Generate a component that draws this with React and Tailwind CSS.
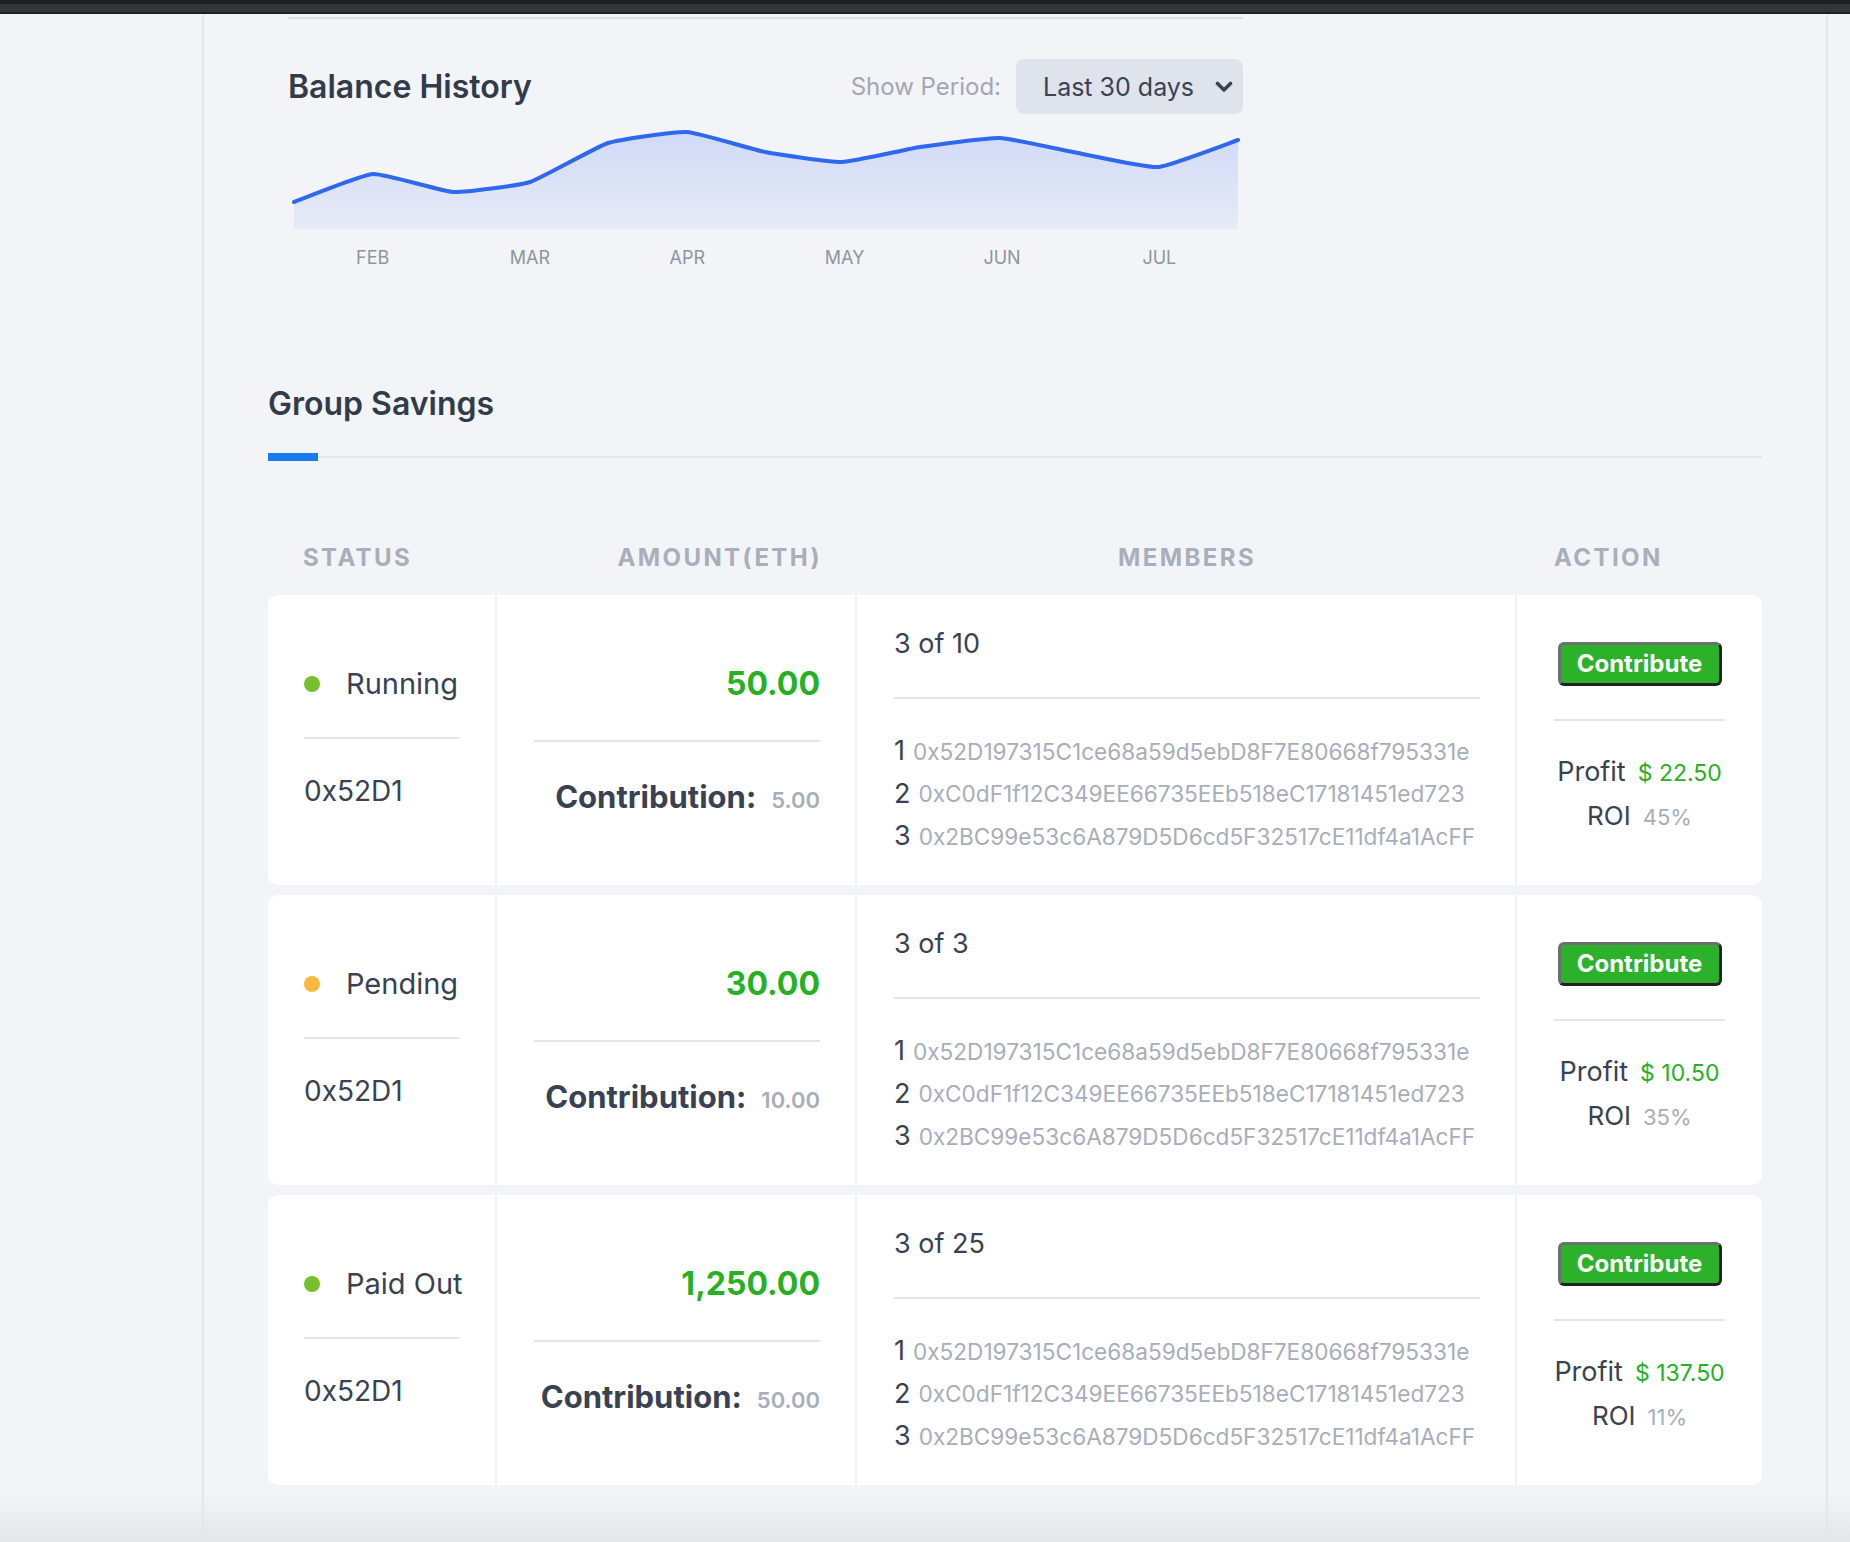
import React from "react";

const points = [
  [6, 88], [85, 60], [165, 78], [242, 68], [320, 29], [399, 18], [477, 38],
  [554, 48], [632, 33], [712, 24], [790, 39], [870, 53], [950, 26],
];

function smoothPath(pts) {
  let d = `M${pts[0][0]},${pts[0][1]}`;
  for (let i = 0; i < pts.length - 1; i++) {
    const p0 = pts[i - 1] || pts[i];
    const p1 = pts[i];
    const p2 = pts[i + 1];
    const p3 = pts[i + 2] || p2;
    const t = 0.07;
    const c1x = p1[0] + (p2[0] - p0[0]) * t;
    const c1y = p1[1] + (p2[1] - p0[1]) * t;
    const c2x = p2[0] - (p3[0] - p1[0]) * t;
    const c2y = p2[1] - (p3[1] - p1[1]) * t;
    d += ` C${c1x},${c1y} ${c2x},${c2y} ${p2[0]},${p2[1]}`;
  }
  return d;
}

const months = ["FEB", "MAR", "APR", "MAY", "JUN", "JUL"];

const members = [
  "0x52D197315C1ce68a59d5ebD8F7E80668f795331e",
  "0xC0dF1f12C349EE66735EEb518eC17181451ed723",
  "0x2BC99e53c6A879D5D6cd5F32517cE11df4a1AcFF",
];

const groups = [
  { status: "Running", dot: "bg-[#74c02f]", amount: "50.00", contribution: "5.00", count: "3 of 10", profit: "22.50", roi: "45%" },
  { status: "Pending", dot: "bg-[#f7b940]", amount: "30.00", contribution: "10.00", count: "3 of 3", profit: "10.50", roi: "35%" },
  { status: "Paid Out", dot: "bg-[#74c02f]", amount: "1,250.00", contribution: "50.00", count: "3 of 25", profit: "137.50", roi: "11%" },
];

function BalanceChart() {
  const line = smoothPath(points);
  const area = `${line} L950,115 L6,115 Z`;
  return (
    <svg width="955" height="118" viewBox="0 0 955 118" className="block">
      <defs>
        <linearGradient id="balfill" x1="0" y1="0" x2="0" y2="1">
          <stop offset="0%" stopColor="#d0daf7" />
          <stop offset="100%" stopColor="#e7ebf6" />
        </linearGradient>
      </defs>
      <path d={area} fill="url(#balfill)" />
      <path d={line} fill="none" stroke="#2f68ee" strokeWidth="4" strokeLinejoin="round" strokeLinecap="round" />
    </svg>
  );
}

function GroupRow({ g }) {
  return (
    <div className="flex h-[290px] rounded-[10px] bg-white">
      <div className="flex w-[229px] flex-col justify-center border-r-2 border-[#f1f2f5] pb-[5px] pl-[36px] pr-[35px]">
        <div className="flex h-[40px] items-center whitespace-nowrap">
          <span className={`h-[16px] w-[16px] shrink-0 rounded-full ${g.dot}`} />
          <span className="ml-[26px] text-[29px] text-[#394253]">{g.status}</span>
        </div>
        <div className="mt-[33px] h-[2px] bg-[#e4e5e9]" />
        <div className="mt-[32px] flex h-[40px] items-center text-[28px] text-[#394253]">0x52D1</div>
      </div>

      <div className="flex w-[360px] flex-col justify-center border-r-2 border-[#f1f2f5] pl-[37px] pr-[35px]">
        <div className="flex h-[40px] items-center justify-end text-[32px] font-bold text-[#27b023]">{g.amount}</div>
        <div className="mt-[36px] h-[2px] bg-[#e4e5e9]" />
        <div className="mt-[35px] h-[40px] whitespace-nowrap text-right leading-[40px]">
          <span className="text-[31px] font-bold text-[#394253]">Contribution:</span>
          <span className="ml-[15px] text-[22px] font-semibold text-[#a8adbb]">{g.contribution}</span>
        </div>
      </div>

      <div className="flex w-[660px] flex-col justify-center border-r-2 border-[#f1f2f5] pl-[37px] pr-[35px]">
        <div className="flex h-[40px] items-center pt-[3px] text-[27px] text-[#394253]">{g.count}</div>
        <div className="mt-[35px] h-[2px] bg-[#e4e5e9]" />
        <div className="mt-[31px] flex flex-col">
          {members.map((m, i) => (
            <div key={m} className="flex h-[42.5px] items-center whitespace-nowrap">
              <span className="text-[27px] text-[#394253]">{i + 1}</span>
              <span className="ml-[8px] text-[22.6px] text-[#a8adbb]">{m}</span>
            </div>
          ))}
        </div>
      </div>

      <div className="flex w-[245px] flex-col justify-center px-[37px]">
        <button className="mx-auto flex h-[44px] w-[164px] items-center justify-center rounded-[6px] border-[3px] border-t-[#6e6e6e] border-l-[#6e6e6e] border-r-[#232323] border-b-[#232323] bg-[#2cb12a] text-[24px] font-bold text-white">
          Contribute
        </button>
        <div className="mt-[33px] h-[2px] bg-[#e4e5e9]" />
        <div className="mt-[31px] flex h-[44px] items-baseline justify-center whitespace-nowrap">
          <span className="text-[27px] text-[#394253]">Profit</span>
          <span className="ml-[12px] text-[23px] text-[#27b023]">$ {g.profit}</span>
        </div>
        <div className="flex h-[42px] items-baseline justify-center whitespace-nowrap">
          <span className="text-[26px] text-[#394253]">ROI</span>
          <span className="ml-[12px] text-[22px] text-[#a8adbb]">{g.roi}</span>
        </div>
      </div>
    </div>
  );
}

export default function App() {
  return (
    <div
      className="flex h-[1542px] w-full flex-col overflow-hidden bg-[linear-gradient(to_bottom,#f2f4f8_96.8%,#e4e5e9_100%)]"
      style={{ fontFamily: "Inter, 'Noto Sans', sans-serif" }}
    >
      <div className="h-[14px] shrink-0 border-t-4 border-b-2 border-[#1f2023] bg-[#34353a]" />

      <div className="flex flex-1">
        <aside className="w-[204px] shrink-0 border-r-2 border-[#e4e6eb]" />

        <main className="w-[1622px] shrink-0 px-[64px]">
          <section className="ml-[20px] w-[955px]">
            <div className="mt-[3px] h-[2px] bg-[#dcdee3]" />
            <div className="mt-[40px] flex h-[55px] items-center justify-between">
              <h2 className="text-[32px] font-semibold text-[#323b4a]">Balance History</h2>
              <div className="flex items-center">
                <span className="text-[24px] text-[#a2a7b3]">Show Period:</span>
                <div className="ml-[15px] flex h-[55px] w-[227px] items-center rounded-[8px] bg-[#dfe3ec] pl-[27px] pr-[10px]">
                  <span className="pt-[2px] text-[25px] text-[#3b4252]">Last 30 days</span>
                  <svg width="18" height="12" viewBox="0 0 18 12" className="ml-auto">
                    <path d="M2.5 2.5 L9 9 L15.5 2.5" fill="none" stroke="#3b4252" strokeWidth="3.6" strokeLinecap="round" strokeLinejoin="round" />
                  </svg>
                </div>
              </div>
            </div>
            <BalanceChart />
            <div className="ml-[6px] mt-[14px] grid w-[944px] grid-cols-6 text-center text-[18px] leading-[24px] text-[#8e94a1]">
              {months.map((m) => (
                <span key={m}>{m}</span>
              ))}
            </div>
          </section>

          <section>
            <h2 className="mt-[114px] text-[32px] font-semibold leading-[40px] text-[#323b4a]">Group Savings</h2>
            <div className="mt-[29px] flex h-[8px] items-center">
              <div className="h-[8px] w-[50px] bg-[#1a7bf1]" />
              <div className="h-[2px] flex-1 bg-[#e4e6ea]" />
            </div>

            <div className="mt-[82px] flex h-[30px] items-center text-[24px] font-bold uppercase tracking-[0.1em] text-[#a9aebb]">
              <div className="w-[229px] pl-[35px]">Status</div>
              <div className="w-[360px] pr-[35px] text-right">Amount(ETH)</div>
              <div className="w-[660px] text-center">Members</div>
              <div className="w-[245px] pl-[37px]">Action</div>
            </div>

            <div className="mt-[22px] flex flex-col gap-[10px]">
              {groups.map((g) => (
                <GroupRow key={g.status} g={g} />
              ))}
            </div>
          </section>
        </main>

        <div className="flex-1 border-l-2 border-[#e4e6eb]" />
      </div>
    </div>
  );
}
